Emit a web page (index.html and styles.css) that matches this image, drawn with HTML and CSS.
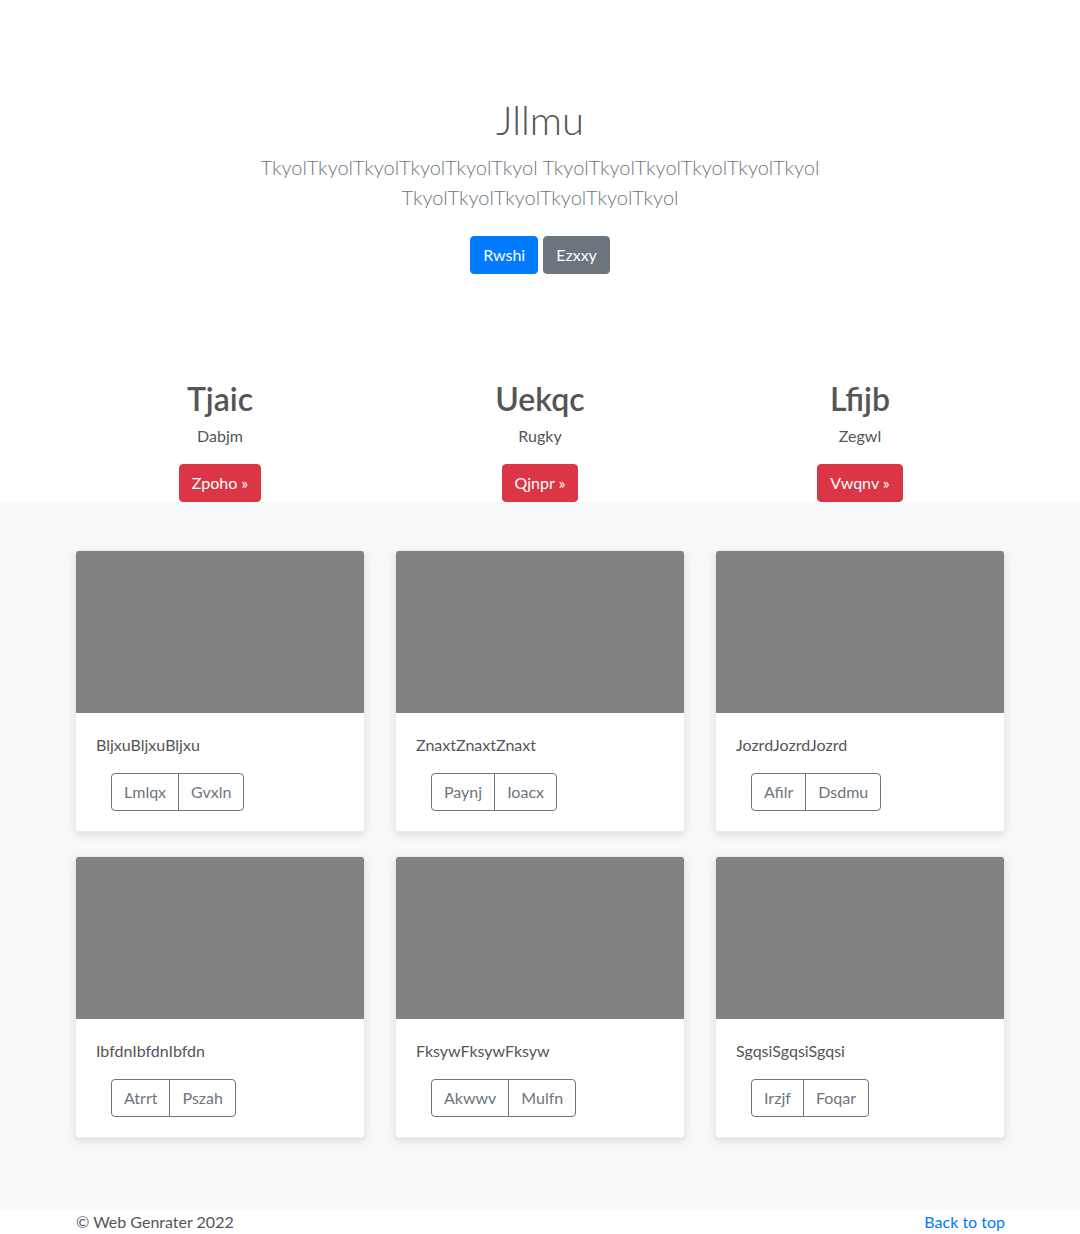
FILE: index.html
```html
<!DOCTYPE html>
<html lang="en">
<head>
<meta charset="utf-8">
<title>Jllmu</title>
<link rel="stylesheet" href="styles.css">
</head>
<body>
<main>
  <section class="hero">
    <h1 class="hero-title">Jllmu</h1>
    <p class="lead">TkyolTkyolTkyolTkyolTkyolTkyol TkyolTkyolTkyolTkyolTkyolTkyol TkyolTkyolTkyolTkyolTkyolTkyol</p>
    <div class="hero-actions">
      <a class="btn btn-primary" href="#">Rwshi</a>
      <a class="btn btn-secondary" href="#">Ezxxy</a>
    </div>
  </section>

  <section class="container features">
    <div class="feature">
      <h2>Tjaic</h2>
      <p>Dabjm</p>
      <a class="btn btn-danger" href="#">Zpoho &raquo;</a>
    </div>
    <div class="feature">
      <h2>Uekqc</h2>
      <p>Rugky</p>
      <a class="btn btn-danger" href="#">Qjnpr &raquo;</a>
    </div>
    <div class="feature">
      <h2>Lfijb</h2>
      <p>Zegwl</p>
      <a class="btn btn-danger" href="#">Vwqnv &raquo;</a>
    </div>
  </section>

  <section class="album">
    <div class="container grid">
      <div class="card">
        <div class="card-img"></div>
        <div class="card-body">
          <p class="card-text">BljxuBljxuBljxu</p>
          <div class="btn-group"><a class="btn-o" href="#">Lmlqx</a><a class="btn-o" href="#">Gvxln</a></div>
        </div>
      </div>
      <div class="card">
        <div class="card-img"></div>
        <div class="card-body">
          <p class="card-text">ZnaxtZnaxtZnaxt</p>
          <div class="btn-group"><a class="btn-o" href="#">Paynj</a><a class="btn-o" href="#">Ioacx</a></div>
        </div>
      </div>
      <div class="card">
        <div class="card-img"></div>
        <div class="card-body">
          <p class="card-text">JozrdJozrdJozrd</p>
          <div class="btn-group"><a class="btn-o" href="#">Afilr</a><a class="btn-o" href="#">Dsdmu</a></div>
        </div>
      </div>
      <div class="card">
        <div class="card-img"></div>
        <div class="card-body">
          <p class="card-text">IbfdnIbfdnIbfdn</p>
          <div class="btn-group"><a class="btn-o" href="#">Atrrt</a><a class="btn-o" href="#">Pszah</a></div>
        </div>
      </div>
      <div class="card">
        <div class="card-img"></div>
        <div class="card-body">
          <p class="card-text">FksywFksywFksyw</p>
          <div class="btn-group"><a class="btn-o" href="#">Akwwv</a><a class="btn-o" href="#">Mulfn</a></div>
        </div>
      </div>
      <div class="card">
        <div class="card-img"></div>
        <div class="card-body">
          <p class="card-text">SgqsiSgqsiSgqsi</p>
          <div class="btn-group"><a class="btn-o" href="#">Irzjf</a><a class="btn-o" href="#">Foqar</a></div>
        </div>
      </div>
    </div>
  </section>
</main>
<footer class="container footer">
  <span>&copy; Web Genrater 2022</span>
  <a href="#" class="top-link">Back to top</a>
</footer>
</body>
</html>
```

FILE: styles.css
```css
* { box-sizing: border-box; }
html, body { margin: 0; padding: 0; }
body {
  font-family: "Lato", "Open Sans", "Liberation Sans", sans-serif;
  font-size: 16px;
  line-height: 1.5;
  color: #555;
  background: #fff;
}
a { text-decoration: none; }

.container {
  width: 960px;
  margin: 0 auto;
  padding: 0 15px;
}

.hero {
  text-align: center;
  padding: 96px 0 98px;
}
.hero-title {
  margin: 0 0 8px;
  font-size: 40px;
  font-weight: 300;
  line-height: 1.2;
  color: #555;
}
.lead {
  width: 720px;
  margin: 0 auto 24px;
  font-size: 20px;
  font-weight: 300;
  line-height: 1.5;
  color: #6c757d;
}
.hero-actions {
  display: flex;
  justify-content: center;
  gap: 5px;
  margin: 0 0 8px;
}

.btn {
  display: inline-block;
  padding: 6px 12px;
  font-size: 16px;
  line-height: 24px;
  border: 1px solid transparent;
  border-radius: 4px;
  color: #fff;
}
.btn-primary { background: #007bff; border-color: #007bff; }
.btn-secondary { background: #6c757d; border-color: #6c757d; }
.btn-danger { background: #dc3545; border-color: #dc3545; }

.features {
  display: grid;
  grid-template-columns: repeat(3, 1fr);
  gap: 30px;
  text-align: center;
}
.feature h2 {
  margin: 0 0 6px;
  font-size: 32px;
  font-weight: 600;
  line-height: 1.2;
  color: #555;
}
.feature p {
  margin: 0 0 16px;
}

.album {
  background: #f8f9fa;
  padding: 48px 0 48px;
}
.grid {
  display: grid;
  grid-template-columns: repeat(3, 1fr);
  column-gap: 30px;
}
.card {
  background: #fff;
  border: 1px solid rgba(0,0,0,.08);
  border-radius: 4px;
  overflow: hidden;
  margin-bottom: 24px;
  box-shadow: 0 3px 10px rgba(0,0,0,.12);
}
.card-img {
  height: 162px;
  background: #828282;
}
.card-body {
  padding: 20px;
}
.card-text {
  margin: 0 0 16px;
}
.btn-group {
  display: inline-flex;
  margin-left: 15px;
}
.btn-o {
  display: inline-block;
  padding: 6px 12px;
  font-size: 16px;
  line-height: 24px;
  color: #6c757d;
  border: 1px solid #6c757d;
}
.btn-o:first-child {
  border-radius: 4px 0 0 4px;
}
.btn-o + .btn-o {
  margin-left: -1px;
  border-radius: 0 4px 4px 0;
}

.footer {
  display: flex;
  justify-content: space-between;
  line-height: 24px;
  color: #555;
}
.footer span { padding-left: 1px; }
.top-link { color: #007bff; }
```
